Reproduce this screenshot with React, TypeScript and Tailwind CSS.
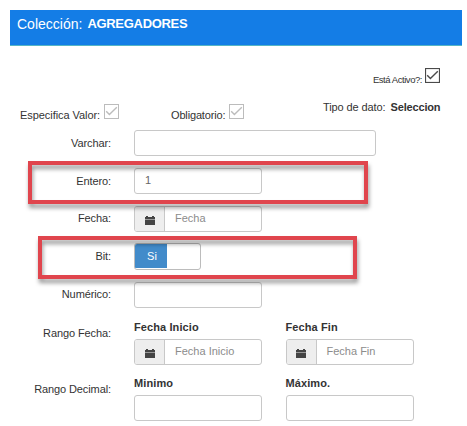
import type { ReactNode } from 'react';

function Check({ dark = false }: { dark?: boolean }) {
  return (
    <svg
      className={`h-[15px] w-[15px] shrink-0 ${dark ? 'text-[#4a4a4a]' : 'text-[#bcbcbc]'}`}
      viewBox="0 0 15 15"
      fill="none"
      stroke="currentColor"
    >
      <rect x="0.5" y="0.5" width="14" height="14" strokeWidth={dark ? 1.2 : 1} />
      <path d="M2.2 7.2 5.4 10.4 12.8 3.2" strokeWidth="1.4" />
    </svg>
  );
}

function Calendar() {
  return (
    <svg className="h-[11px] w-[10px]" viewBox="0 0 10 11" fill="#444">
      <path d="M0 2h1V1h2v1h4V1h2v1h1v2H0z" />
      <path d="M0 5h10v5H0z" />
      <path d="M0 4.5h10" stroke="#999" />
    </svg>
  );
}

function Row({
  label,
  className,
  labelClassName = 'mt-[6px]',
  children,
}: {
  label: string;
  className: string;
  labelClassName?: string;
  children: ReactNode;
}) {
  return (
    <div className={`flex shrink-0 items-start ${className}`}>
      <label className={`w-[111px] shrink-0 whitespace-nowrap text-right leading-[14px] tracking-[-0.1px] ${labelClassName}`}>
        {label}
      </label>
      <div className="ml-[23px] flex gap-[23.5px]">{children}</div>
    </div>
  );
}

function Field({ className = 'w-[128px]', value = '' }: { className?: string; value?: string }) {
  return (
    <div className={`h-[26px] rounded-[3px] border border-[#c8c8c8] bg-white pl-[10px] leading-[23px] text-[#666] ${className}`}>
      {value}
    </div>
  );
}

function DateField({ text }: { text: string }) {
  return (
    <div className="flex h-[26px] w-[128px] overflow-hidden rounded-[3px] border border-[#c8c8c8] bg-white">
      <div className="flex w-[30px] items-center justify-center border-r border-[#c8c8c8] bg-[#eeeeee] pt-[2px]">
        <Calendar />
      </div>
      <span className="ml-[10px] whitespace-nowrap leading-[23px] text-[#8c8c8c]">{text}</span>
    </div>
  );
}

function Titled({ title, children }: { title: string; children: ReactNode }) {
  return (
    <div>
      <div className="h-[18px] whitespace-nowrap font-bold leading-[13px] tracking-[0.1px] text-[#333]">{title}</div>
      {children}
    </div>
  );
}

function Highlight({ className }: { className: string }) {
  return (
    <div
      className={`pointer-events-none absolute h-[43px] border-[4px] border-[#e0454d] [filter:drop-shadow(1px_4px_2px_rgba(0,0,0,0.4))] ${className}`}
    />
  );
}

export default function App() {
  return (
    <main className="relative flex h-[426px] w-[467px] flex-col overflow-hidden bg-white font-['Liberation_Sans',Arial,sans-serif] text-[11px] text-[#333]">
      <header className="ml-[10px] mt-[10px] flex h-[36px] w-[452px] shrink-0 gap-[5px] whitespace-nowrap border-b border-[#55b5c5] bg-[#147de6] pl-[7px] text-[14px] leading-[28px] text-white">
        <span>Colección:</span>
        <b className="text-[13px] tracking-[-0.3px]">AGREGADORES</b>
      </header>
      <div className="mt-[22px] flex h-[17px] w-[440px] shrink-0 justify-end gap-[3px]">
        <span className="mt-[5px] whitespace-nowrap text-[9.5px] leading-[14px] tracking-[-0.45px]">Está Activo?:</span>
        <Check dark />
      </div>
      <div className="mt-[15px] flex h-[30px] shrink-0">
        <div className="ml-[20px] mt-[4px] flex w-[151px] gap-[4px]">
          <span className="mt-[4px] whitespace-nowrap leading-[14px] tracking-[-0.06px]">Especifica Valor:</span>
          <Check />
        </div>
        <div className="mt-[4px] flex w-[152px] gap-[4px]">
          <span className="mt-[4px] whitespace-nowrap leading-[14px] tracking-[-0.16px]">Obligatorio:</span>
          <Check />
        </div>
        <div className="flex gap-[5px] whitespace-nowrap leading-[14px]">
          <span className="tracking-[-0.1px]">Tipo de dato:</span>
          <b className="tracking-[-0.16px]">Seleccion</b>
        </div>
      </div>
      <Row label="Varchar:" className="h-[38px]">
        <Field className="w-[242px]" />
      </Row>
      <Row label="Entero:" className="h-[38px]">
        <Field value="1" />
      </Row>
      <Row label="Fecha:" className="h-[37px]" labelClassName="mt-[5px]">
        <DateField text="Fecha" />
      </Row>
      <Row label="Bit:" className="h-[39px]">
        <div className="flex h-[27px] w-[67px] overflow-hidden rounded-[3px] border border-[#bcbcbc] bg-white">
          <span className="h-[24px] w-[32px] bg-[#428bca] pl-[2px] text-center leading-[25px] text-white">Si</span>
        </div>
      </Row>
      <Row label="Numérico:" className="h-[39px]" labelClassName="mt-[5px]">
        <Field />
      </Row>
      <Row label="Rango Fecha:" className="h-[56px]" labelClassName="mt-[5px]">
        <Titled title="Fecha Inicio">
          <DateField text="Fecha Inicio" />
        </Titled>
        <Titled title="Fecha Fin">
          <DateField text="Fecha Fin" />
        </Titled>
      </Row>
      <Row label="Rango Decimal:" className="h-[49px]" labelClassName="mt-[5px]">
        <Titled title="Minimo">
          <Field />
        </Titled>
        <Titled title="Máximo.">
          <Field />
        </Titled>
      </Row>
      <Highlight className="left-[28px] top-[161px] w-[340px]" />
      <Highlight className="left-[38px] top-[236px] w-[319px]" />
    </main>
  );
}
